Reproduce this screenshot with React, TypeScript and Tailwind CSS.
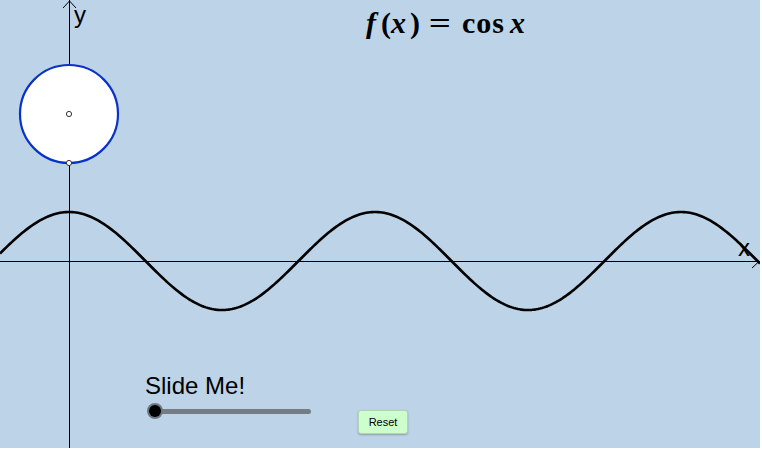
const W = 760;
const H = 448;
const OX = 69;
const OY = 261;
const U = 48.7;

function curvePath() {
  const pts: string[] = [];
  for (let x = 0; x <= W; x += 2) {
    const y = OY - 49 * Math.cos((x - OX) / U);
    pts.push(`${x === 0 ? 'M' : 'L'}${x},${y.toFixed(2)}`);
  }
  return pts.join(' ');
}

export default function App() {
  return (
    <div className="w-[762px] h-[450px] bg-white">
      {/* applet canvas: items placed at their graph coordinates */}
      <div className="relative w-[760px] h-[448px] bg-[#bdd3e7] overflow-hidden">
        <svg width={W} height={H} className="absolute left-0 top-0">
          <line x1={0} y1={OY + 0.5} x2={W} y2={OY + 0.5} stroke="#000" strokeWidth={1} />
          <line x1={OX + 0.5} y1={0} x2={OX + 0.5} y2={H} stroke="#000" strokeWidth={1} />
          <path d={`M${OX - 6},${8} L${OX + 0.5},1 L${OX + 7},8`} fill="none" stroke="#000" strokeWidth={1} />
          <path d={`M${W - 8},${OY - 6} L${W - 1},${OY + 0.5} L${W - 8},${OY + 7}`} fill="none" stroke="#000" strokeWidth={1} />
          <path d={curvePath()} fill="none" stroke="#000" strokeWidth={2.6} strokeLinejoin="round" />
          <circle cx={OX} cy={114} r={49} fill="#fff" stroke="#0a32c8" strokeWidth={2.2} />
          <circle cx={OX} cy={114} r={2.6} fill="#fff" stroke="#333" strokeWidth={1} />
          <circle cx={OX} cy={163} r={2.6} fill="#fff" stroke="#333" strokeWidth={1} />
        </svg>

        <span className="absolute left-[74px] top-[3px] text-[24px] leading-none font-['Liberation_Sans',sans-serif] text-black">y</span>
        <span className="absolute left-[738px] top-[236px] text-[24px] leading-none font-['Liberation_Sans',sans-serif] text-black">x</span>

        <div className="absolute left-[366px] top-[8px] flex items-baseline text-[30px] leading-none font-bold text-black font-['Liberation_Serif',serif] whitespace-nowrap">
          <span className="italic">f</span>
          <span className="ml-[5px]">(</span>
          <span className="italic">x</span>
          <span className="ml-[4px]">)</span>
          <span className="ml-[8px] inline-block w-[24px] text-center scale-x-[1.3]">=</span>
          <span className="ml-[10px] tracking-[1px]">cos</span>
          <span className="italic ml-[5px]">x</span>
        </div>

        <div className="absolute left-[145px] top-[374px] flex flex-col gap-[5px]">
          <span className="text-[24px] leading-none text-black font-['Liberation_Sans',sans-serif]">Slide Me!</span>
          <div className="relative w-[164px] h-[16px] ml-[2px] flex items-center">
            <div className="h-[5px] w-full ml-[8px] rounded-full bg-[#747d86]" />
            <div className="absolute left-0 top-0 w-[16px] h-[16px] rounded-full bg-[#6e7780] flex items-center justify-center">
              <div className="w-[12px] h-[12px] rounded-full bg-black" />
            </div>
          </div>
        </div>

        <button className="absolute left-[358px] top-[410px] w-[50px] h-[24px] bg-[#ccffcc] border border-[#b4d2b4] rounded-[3px] shadow-[0_1px_2px_rgba(0,0,0,0.25)] text-[11px] text-black font-['Liberation_Sans',sans-serif]">
          Reset
        </button>
      </div>
    </div>
  );
}
